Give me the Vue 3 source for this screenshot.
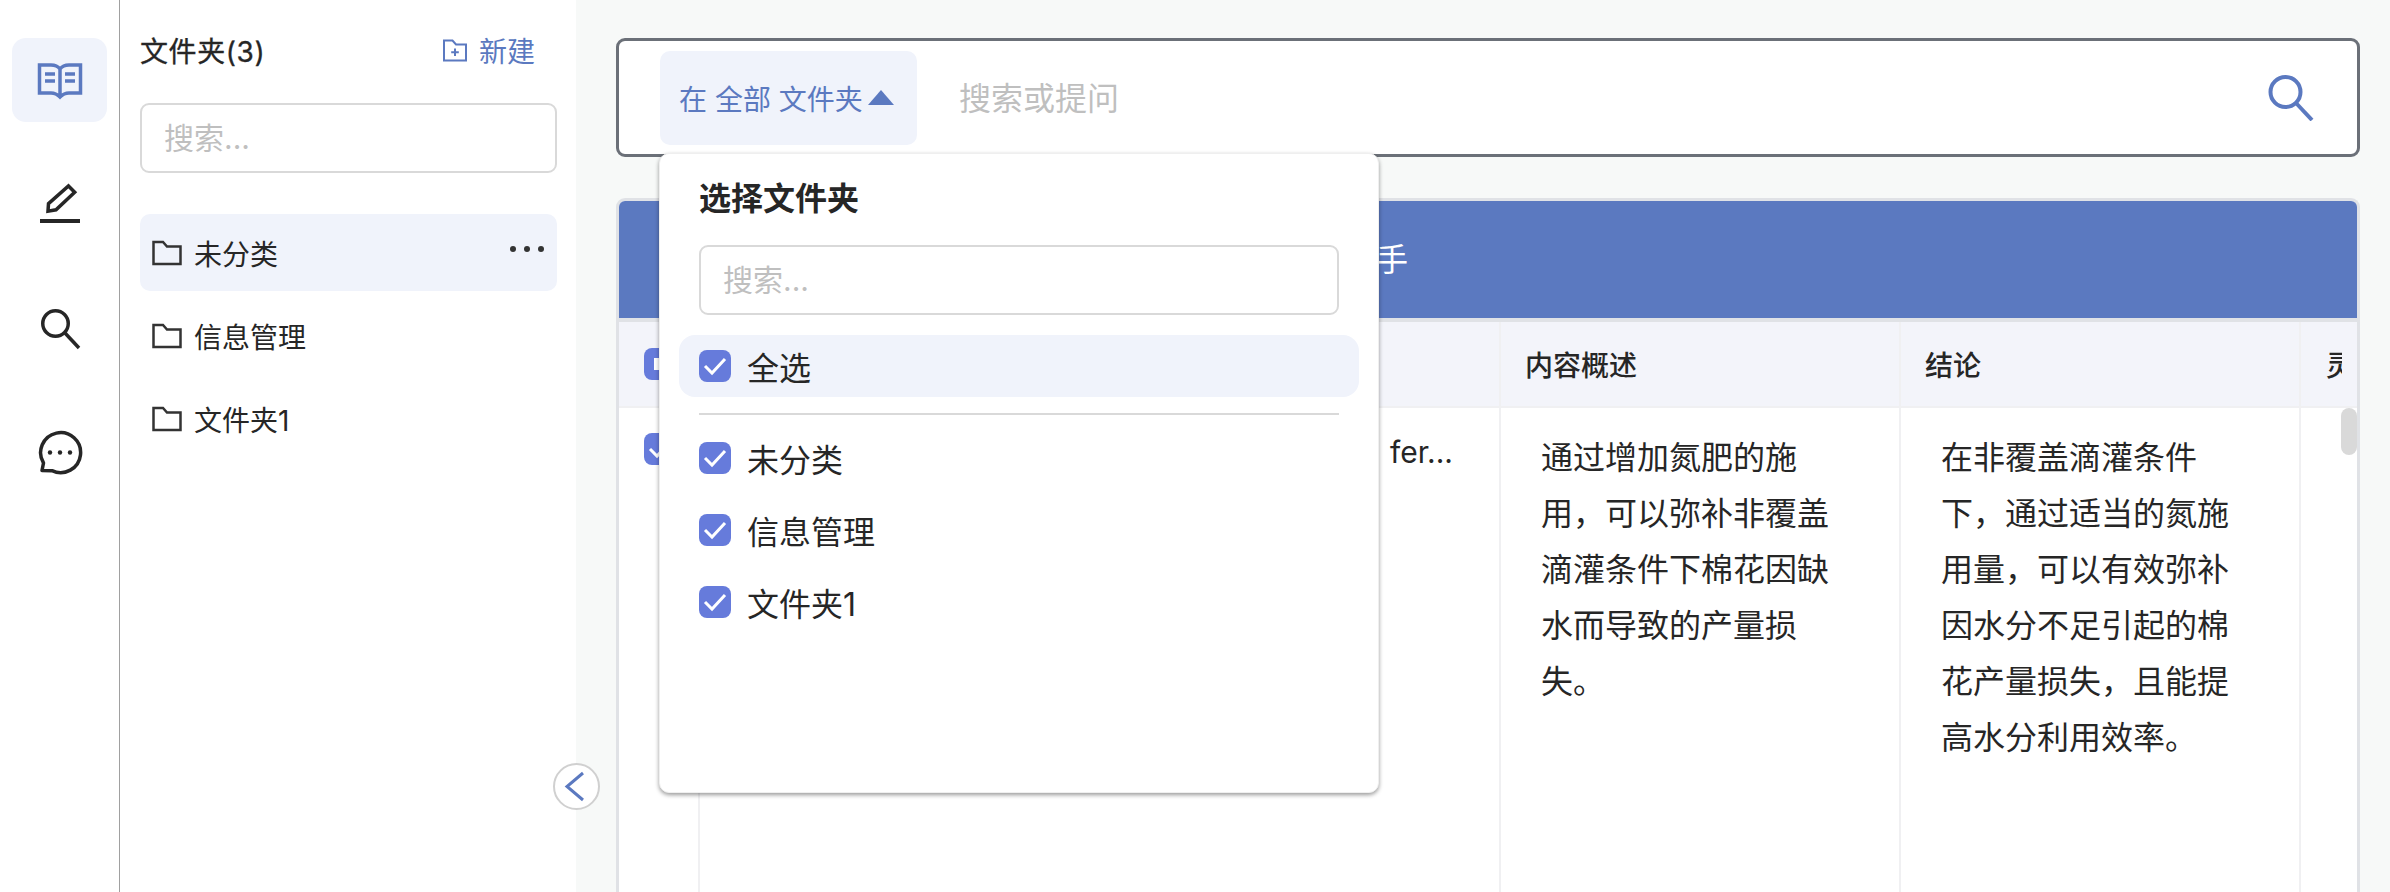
<script setup>
const railIcons = ['book', 'pen', 'search', 'chat']
const folders = ['未分类', '信息管理', '文件夹1']
const summary = '通过增加氮肥的施用，可以弥补非覆盖滴灌条件下棉花因缺水而导致的产量损失。'
const conclusion = '在非覆盖滴灌条件下，通过适当的氮施用量，可以有效弥补因水分不足引起的棉花产量损失，且能提高水分利用效率。'
</script>

<template>
  <div class="page">
    <nav class="rail">
      <div v-for="(icon, i) in railIcons" :key="icon" class="rail-item" :class="{ active: i === 0 }">
        <svg v-if="icon === 'book'" class="rail-icon book" viewBox="0 0 48 48">
          <path d="M3.5 9H15Q21 9 24 13Q27 9 33 9H44.5V37H33Q28 37 24 41Q20 37 15 37H3.5ZM24 13V41" />
          <path d="M9 18H19M9 25H19M29 18H39M29 25H39" />
        </svg>
        <svg v-else-if="icon === 'pen'" class="rail-icon" viewBox="0 0 48 48">
          <path d="M32.5 6L38.7 12.2L20 29.8L12 31.2L12.5 23.6Z" />
          <path d="M4 41H44" stroke-width="4" />
        </svg>
        <svg v-else-if="icon === 'search'" class="rail-icon" viewBox="0 0 48 48">
          <circle cx="19.5" cy="19.5" r="12.75" />
          <path d="M29 29L43 44" />
        </svg>
        <svg v-else class="rail-icon" viewBox="0 0 48 48">
          <path d="M7.5 35A20 20 0 1 1 16 42.7L6 42.5Z" stroke-linejoin="round" />
          <circle class="dot" cx="14" cy="24.5" r="2.2" />
          <circle class="dot" cx="24" cy="24.5" r="2.2" />
          <circle class="dot" cx="34" cy="24.5" r="2.2" />
        </svg>
      </div>
    </nav>

    <aside class="sidebar">
      <header class="side-head">
        <span class="side-title">文件夹(3)</span>
        <span class="new-btn">
          <svg class="new-icon" viewBox="0 0 24 24">
            <path d="M1 2.5H9.5L13 6.5H23V22.5H1Z" />
            <path d="M12 10.5V18M8.2 14.2H15.8" />
          </svg>
          新建
        </span>
      </header>
      <input class="field side-search" placeholder="搜索..." />
      <ul class="folder-list">
        <li v-for="(name, i) in folders" :key="name" class="folder" :class="{ active: i === 0 }">
          <svg class="folder-icon" viewBox="0 0 30 26">
            <path d="M1.5 2H11L15 6.5H28.5V24H1.5Z" />
          </svg>
          <span>{{ name }}</span>
          <span v-if="i === 0" class="more"><i></i><i></i><i></i></span>
        </li>
      </ul>
      <button class="collapse">
        <svg viewBox="0 0 43 43">
          <path d="M28 8L12 21.5L28 35" />
        </svg>
      </button>
    </aside>

    <main class="main">
      <div class="search-box">
        <div class="scope">
          <span>在 全部 文件夹</span>
          <svg class="tri" viewBox="0 0 26 15"><path d="M13 0L26 15H0Z" /></svg>
        </div>
        <input class="ask" placeholder="搜索或提问" />
        <svg class="go" viewBox="0 0 46 46">
          <circle cx="17.5" cy="17" r="15" />
          <path d="M28 28L44 45" />
        </svg>

        <div class="panel">
          <div class="panel-title">选择文件夹</div>
          <input class="field panel-search" placeholder="搜索..." />
          <div class="opt all">
            <span class="check"><svg viewBox="0 0 32 32"><path d="M6 16L13 23L26 9" /></svg></span>
            <span>全选</span>
          </div>
          <div class="rule"></div>
          <div v-for="name in folders" :key="name" class="opt">
            <span class="check"><svg viewBox="0 0 32 32"><path d="M6 16L13 23L26 9" /></svg></span>
            <span>{{ name }}</span>
          </div>
        </div>
      </div>

      <section class="table">
        <div class="banner">手</div>
        <div class="row head">
          <div class="cell check-cell"><span class="check"><i class="partial"></i></span></div>
          <div class="cell"></div>
          <div class="cell">内容概述</div>
          <div class="cell">结论</div>
          <div class="cell last"><span>灵感</span></div>
        </div>
        <div class="row body">
          <div class="cell check-cell"><span class="check"><svg viewBox="0 0 32 32"><path d="M6 16L13 23L26 9" /></svg></span></div>
          <div class="cell title-cell">fer...</div>
          <div class="cell text-cell">{{ summary }}</div>
          <div class="cell text-cell">{{ conclusion }}</div>
          <div class="cell"></div>
        </div>
        <div class="thumb"></div>
      </section>
    </main>
  </div>
</template>

<style scoped>
.page {
  display: flex;
  width: 2390px;
  height: 892px;
  overflow: hidden;
  color: #262626;
  font-family: "Inter", "Noto Sans CJK SC", sans-serif;
  background: #fff;
}

.rail {
  box-sizing: border-box;
  flex: none;
  width: 120px;
  padding: 38px 12px 0;
  border-right: 1px solid #a0a0a0;
  display: flex;
  flex-direction: column;
  gap: 40px;
}
.rail-item {
  width: 95px;
  height: 84px;
  border-radius: 14px;
  display: flex;
  align-items: center;
  justify-content: center;
}
.rail-item.active { background: #f0f3fb; }
.rail-icon {
  width: 48px;
  height: 48px;
  fill: none;
  stroke: #262626;
  stroke-width: 3.5;
}
.rail-icon.book { stroke: #5b79c0; }
.rail-icon .dot { fill: #262626; stroke: none; }

.sidebar {
  box-sizing: border-box;
  position: relative;
  flex: none;
  width: 456px;
  padding: 30px 19px 0 20px;
}
.side-head {
  display: flex;
  align-items: center;
  justify-content: space-between;
  height: 40px;
  padding-right: 22px;
}
.side-title {
  font-size: 28px;
  font-weight: 400;
  letter-spacing: 0.6px;
  -webkit-text-stroke: 0.3px #262626;
}
.new-btn {
  display: flex;
  align-items: center;
  gap: 12px;
  font-size: 28px;
  color: #5b79c0;
}
.new-icon {
  width: 24px;
  height: 24px;
  fill: none;
  stroke: #5b79c0;
  stroke-width: 2;
}
.field {
  box-sizing: border-box;
  display: block;
  border: 2px solid #d9d9d9;
  border-radius: 9px;
  outline: none;
  background: #fff;
  font: 30px "Inter", "Noto Sans CJK SC", sans-serif;
}
.field::placeholder { color: #bfbfbf; }
.side-search {
  width: 100%;
  height: 70px;
  margin-top: 33px;
  padding: 0 22px;
}
.folder-list {
  list-style: none;
  margin: 41px 0 0;
  padding: 0;
  display: flex;
  flex-direction: column;
  gap: 6px;
}
.folder {
  height: 77px;
  display: flex;
  align-items: center;
  gap: 12px;
  padding: 0 12px;
  border-radius: 10px;
  font-size: 28px;
  position: relative;
}
.folder.active { background: #f0f3fb; }
.folder-icon {
  width: 30px;
  height: 26px;
  fill: none;
  stroke: #333;
  stroke-width: 2.5;
}
.more {
  position: absolute;
  right: 13px;
  top: 32px;
  display: flex;
  gap: 8px;
}
.more i {
  width: 6px;
  height: 6px;
  border-radius: 50%;
  background: #333;
}
.collapse {
  position: absolute;
  right: -24px;
  top: 763px;
  z-index: 5;
  box-sizing: border-box;
  width: 47px;
  height: 47px;
  padding: 0;
  border: 2px solid #d0d0d0;
  border-radius: 50%;
  background: #fff;
}
.collapse svg {
  display: block;
  width: 43px;
  height: 43px;
  fill: none;
  stroke: #5b79c0;
  stroke-width: 3;
}

.main {
  flex: 1;
  min-width: 0;
  box-sizing: border-box;
  height: 892px;
  padding: 38px 30px 0 40px;
  background: #f7f9f8;
  display: flex;
  flex-direction: column;
  gap: 41px;
}
.search-box {
  box-sizing: border-box;
  position: relative;
  flex: none;
  height: 119px;
  padding: 10px 43px 10px 41px;
  border: 3px solid #6b7078;
  border-radius: 9px;
  background: #fff;
  display: flex;
  align-items: center;
  gap: 42px;
}
.scope {
  flex: none;
  box-sizing: border-box;
  width: 257px;
  height: 94px;
  padding-left: 19px;
  border-radius: 10px;
  background: #f0f3fb;
  color: #5b79c0;
  font-size: 28px;
  display: flex;
  align-items: center;
  gap: 5px;
  white-space: nowrap;
}
.tri { width: 26px; height: 15px; fill: #5b79c0; }
.ask {
  flex: 1;
  min-width: 0;
  border: 0;
  outline: none;
  background: none;
  padding: 2px 0 0;
  font: 32px "Inter", "Noto Sans CJK SC", sans-serif;
}
.ask::placeholder { color: #bfbfbf; }
.go {
  flex: none;
  width: 46px;
  height: 46px;
  fill: none;
  stroke: #5b79c0;
  stroke-width: 4;
}

.panel {
  box-sizing: border-box;
  position: absolute;
  z-index: 10;
  left: 40px;
  top: 112px;
  width: 720px;
  height: 640px;
  padding: 28px 19px;
  border-radius: 10px;
  background: #fff;
  border: 1px solid #efefef;
  box-shadow: 0 2px 4px rgba(0, 0, 0, 0.4);
}
.panel-title {
  height: 34px;
  margin-left: 20px;
  font-size: 32px;
  line-height: 34px;
  font-weight: 600;
}
.panel-search {
  width: 640px;
  height: 70px;
  margin: 29px 0 20px 20px;
  padding: 0 22px;
}
.opt {
  height: 72px;
  padding-left: 20px;
  display: flex;
  align-items: center;
  gap: 16px;
  font-size: 32px;
}
.opt.all {
  height: 62px;
  border-radius: 16px;
  background: #f0f3fb;
}
.rule {
  height: 2px;
  margin: 16px 20px 7px;
  background: #d9d9d9;
}
.check {
  flex: none;
  width: 32px;
  height: 32px;
  border-radius: 8px;
  background: #667bdb;
  display: flex;
  align-items: center;
  justify-content: center;
}
.check svg {
  width: 32px;
  height: 32px;
  fill: none;
  stroke: #fff;
  stroke-width: 3;
}
.partial { width: 12px; height: 12px; background: #fff; }

.table {
  position: relative;
  flex: 1;
  min-height: 0;
  box-sizing: border-box;
  border: 3px solid #e0e2e6;
  border-bottom: 0;
  border-radius: 9px 9px 0 0;
  background: #fff;
  display: flex;
  flex-direction: column;
  overflow: hidden;
}
.banner {
  flex: none;
  box-sizing: border-box;
  height: 117px;
  padding-left: 757px;
  background: #5b79c0;
  color: #fff;
  font-size: 32px;
  line-height: 117px;
}
.row {
  display: grid;
  grid-template-columns: 81px 801px 400px 400px 56px;
}
.head {
  flex: none;
  box-sizing: border-box;
  height: 90px;
  border-top: 4px solid #e0e2e6;
  border-bottom: 2px solid #f0f0f2;
  background: #f3f4fa;
  font-size: 28px;
  font-weight: 500;
}
.head .cell {
  display: flex;
  align-items: center;
  padding-left: 24px;
}
.head .cell.last {
  border-right: 0;
  width: 41px;
  padding-left: 25px;
  overflow: hidden;
  white-space: nowrap;
}
.body { flex: 1; min-height: 0; }
.cell {
  box-sizing: border-box;
  min-width: 0;
  border-right: 2px solid #f0f0f2;
}
.cell:last-child { border-right: 0; }
.check-cell {
  padding: 25px 0 0 25px;
  border-right: 2px solid #f0f0f2;
}
.head .cell.check-cell { padding: 0 0 0 25px; }
.title-cell {
  padding: 16px 46px 0 0;
  font-size: 30px;
  line-height: 56px;
  text-align: right;
}
.text-cell {
  padding: 22px 60px 0 40px;
  font-size: 32px;
  line-height: 56px;
}
.thumb {
  position: absolute;
  right: 0;
  top: 207px;
  width: 16px;
  height: 47px;
  border-radius: 8px;
  background: #d9d9d9;
}
</style>

<style>
html, body { margin: 0; overflow: hidden; }
</style>
